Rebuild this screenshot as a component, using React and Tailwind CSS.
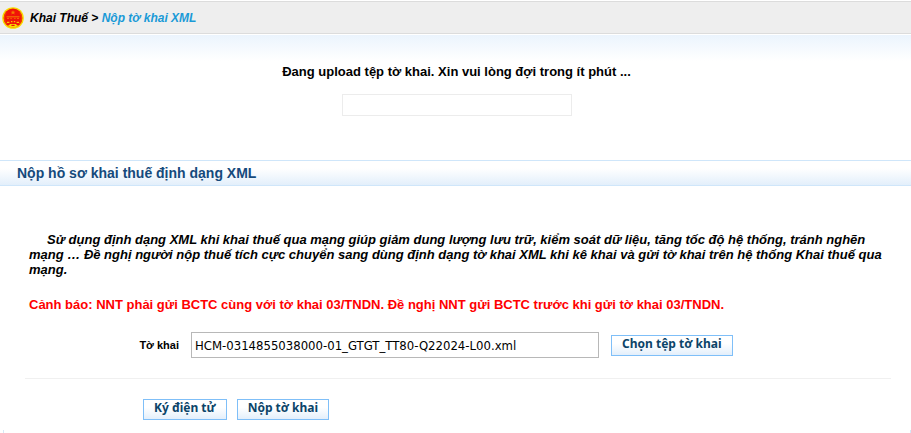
import React from "react";

function Emblem() {
  return (
    <svg viewBox="0 0 22 22" className="w-[22px] h-[22px] shrink-0" aria-hidden="true">
      <circle cx="11" cy="11" r="10.8" fill="#f7dc00" />
      <circle cx="11" cy="11" r="9.4" fill="#f01408" />
      <path d="M4.2 5.6A9 9 0 0 0 4.8 17M17.8 5.6A9 9 0 0 1 17.2 17" fill="none" stroke="#f04a00" strokeWidth="1" />
      <path d="M11 3.2l.7 1.6h1.7l-1.3 1 .5 1.7-1.6-1-1.6 1 .5-1.7-1.3-1h1.7z" fill="#f47a00" />
      <path d="M4.5 9.8h13" stroke="#f58a00" strokeWidth=".9" />
      <path d="M5 11.4h2M8.4 11.4h1.4M12.2 11.4h1.4M15 11.4h2" stroke="#f57000" strokeWidth="1" />
      <path d="M5 15.4h2.4M9 14.6h1.4M11.8 14.6h1.4M14.6 15.4H17" stroke="#f8c800" strokeWidth="1.3" />
      <path d="M6 18.8l2.4-1.8h5.2l2.4 1.8-2.6 1.8H8.6z" fill="#f7dc00" />
      <path d="M9.4 18.4h3.2" stroke="#f01408" strokeWidth="1.2" />
    </svg>
  );
}

function ActionButton({ children }) {
  return (
    <button
      type="button"
      className="h-[21px] px-[10px] pb-[3px] border border-[#7fbff8] bg-linear-to-b from-white from-40% to-[#e3effb] font-['Noto_Sans',sans-serif] font-bold text-[12px] leading-[16px] text-[#0b4469] whitespace-nowrap"
    >
      {children}
    </button>
  );
}

export default function App() {
  return (
    <div className="bg-white text-black font-['Liberation_Sans',Arial,sans-serif]">
      {/* Breadcrumb */}
      <nav className="mt-px h-[33px] px-[2px] flex items-center gap-[6px] border-y border-[#dcdcdc] bg-[#eeeeee] font-bold italic text-[12px]">
        <Emblem />
        <span>
          Khai Thuế &gt; <a href="#" className="text-[#1a9ad7]">Nộp tờ khai XML</a>
        </span>
      </nav>

      {/* Upload status */}
      <section className="mt-px h-[125px] pt-[29px] pl-[2px] flex flex-col items-center bg-linear-to-b from-[#ebf4fd] to-white to-[26px]">
        <p className="font-bold text-[13px] leading-[15px]">
          Đang upload tệp tờ khai. Xin vui lòng đợi trong ít phút ...
        </p>
        <div className="mt-[15px] w-[230px] h-[22px] border border-[#ececec]" />
      </section>

      <h1 className="h-[26px] px-[17px] flex items-center border-y border-[#cfe6fa] bg-linear-to-b from-white from-30% to-[#e3effb] font-bold text-[14px] text-[#154a7c]">
        Nộp hồ sơ khai thuế định dạng XML
      </h1>

      <form className="pt-[46px] pl-[25px] pr-[20px]" onSubmit={(e) => e.preventDefault()}>
        <div className="px-1 font-bold text-[13px] leading-[15px]">
          <p className="italic indent-[18px]">
            Sử dụng định dạng XML khi khai thuế qua mạng giúp giảm dung lượng lưu trữ, kiểm soát dữ liệu, tăng tốc độ hệ thống, tránh nghẽn mạng … Đề nghị người nộp thuế tích cực chuyển sang dùng định dạng tờ khai XML khi kê khai và gửi tờ khai trên hệ thống Khai thuế qua mạng.
          </p>
          <p className="mt-5 text-[#ff0000]">
            Cảnh báo: NNT phải gửi BCTC cùng với tờ khai 03/TNDN. Đề nghị NNT gửi BCTC trước khi gửi tờ khai 03/TNDN.
          </p>
        </div>

        {/* File row */}
        <div className="mt-5 flex items-center gap-3">
          <label htmlFor="declaration" className="w-[154px] text-right font-bold text-[11px]">
            Tờ khai
          </label>
          <input
            id="declaration"
            type="text"
            readOnly
            value="HCM-0314855038000-01_GTGT_TT80-Q22024-L00.xml"
            className="w-[408px] h-[26px] px-[3px] border border-[#b8b8b8] bg-white font-['DejaVu_Sans_Condensed','DejaVu_Sans',sans-serif] text-[13px]"
          />
          <ActionButton>Chọn tệp tờ khai</ActionButton>
        </div>

        <hr className="mt-5 border-[#f0f0f0]" />

        <div className="mt-5 pl-[118px] flex gap-[10px]">
          <ActionButton>Ký điện tử</ActionButton>
          <ActionButton>Nộp tờ khai</ActionButton>
        </div>
      </form>

      <div className="mt-[10px] ml-[3px] h-[3px] border-x border-[#d6e8f6]" />
    </div>
  );
}
